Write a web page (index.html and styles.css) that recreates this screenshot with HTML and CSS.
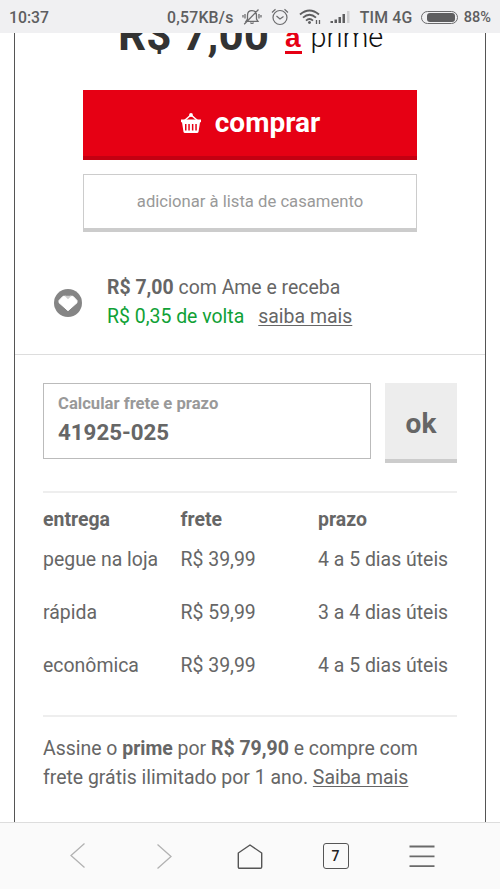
FILE: index.html
```html
<!DOCTYPE html>
<html lang="pt-BR">
<head>
<meta charset="utf-8">
<title>Produto</title>
<link rel="stylesheet" href="styles.css">
</head>
<body>
<header class="status">
  <span class="clock">10:37</span>
  <span class="speed">0,57KB/s</span>
  <svg class="mute" width="20" height="18" viewBox="0 0 20 18" fill="none" stroke="#6c6c6e" stroke-width="1.3">
    <path d="M5.500 11V7.500C5.500 4.500 7 2.700 10 2.700S14.500 4.500 14.500 7.500V11l1.500 2.300H4L5.500 11M8.500 14.500c.4 1.300 2.600 1.300 3 0M2.200 16.300L16.500 1.500M3 6v4.500M17 6v4.500M1 7v2.500M19 7v2.500"/>
  </svg>
  <svg class="alarm" width="18" height="18" viewBox="0 0 18 18" fill="none" stroke="#6c6c6e" stroke-width="1.2">
    <circle cx="9" cy="9.500" r="7"/><path d="M5.500 8l3.500 3 3.500-2.500M1 4.500L4.500 1.300M17 4.500L13.500 1.300"/>
  </svg>
  <svg class="wifi" width="23" height="18" viewBox="0 0 23 18" fill="none" stroke="#5e5e60" stroke-width="1.900">
    <path d="M1 6.500Q10.500-1.500 20 6.500M4 9.600Q10.500 4 17 9.600M7 12.600Q10.500 9.500 14 12.600"/>
    <circle cx="10.500" cy="14.500" r="1.500" fill="#5e5e60" stroke="none"/>
    <path d="M17.500 12v4M20.500 12v4" stroke-width="1.300"/>
  </svg>
  <svg class="signal" width="21" height="14" viewBox="0 0 21 14" fill="#5e5e60">
    <path d="M.5 11h2.500v2H.5zM4.500 9.500H7V13H4.500zM8.500 7H11v6H8.500zM12.500 4H15v9h-2.500z"/><path d="M17 1h2.500v12H17z" fill="#cfcfd1"/>
  </svg>
  <span class="carrier">TIM 4G</span>
  <span class="battery"><span class="charge"></span></span>
  <span class="percent">88%</span>
</header>

<main class="page">
  <section class="card">
    <div class="price-row">
      <span class="price">R$ 7,00</span>
      <span class="logo-a">a</span>
      <span class="logo-prime">prime</span>
    </div>
    <button class="buy">
      <svg width="22" height="22" viewBox="0 0 22 22">
        <path d="M4.500 8.500L11 3l6.500 5.500" fill="none" stroke="#fff" stroke-width="1.500"/>
        <circle cx="11" cy="3" r="1.900" fill="#fff"/>
        <path fill="#fff" fill-rule="evenodd" d="M1 7.500h20v2.800h-1L18.500 20q-.3 1-1.500 1H5q-1.200 0-1.500-1L2 10.300H1zM5 12v6.500h1.500V12zM8.300 12v6.500h1.500V12zM11.900 12v6.500h1.500V12zM15.300 12v6.500h1.500V12z"/>
      </svg>
      <span>comprar</span>
    </button>
    <button class="wishlist">adicionar à lista de casamento</button>

    <div class="cashback">
      <svg width="28" height="28" viewBox="0 0 28 28">
        <circle cx="14" cy="14" r="14" fill="#858585"/>
        <path d="M5 11.500L9 7.300h3l2 2 2-2h3l4 4.200v2.200L14 21.700 5 13.700z" fill="#fff" stroke="#fff" stroke-linejoin="round"/>
        <path d="M10.500 6.800L14 10.300l3.500-3.500z" fill="#cfcfcf"/>
      </svg>
      <div class="cashback-text">
        <div><b>R$ 7,00</b> com Ame e receba</div>
        <div><span class="green">R$ 0,35 de volta</span><a class="link">saiba mais</a></div>
      </div>
    </div>

    <div class="shipping">
      <div class="zip-row">
        <label class="zip">
          <span class="zip-label">Calcular frete e prazo</span>
          <span class="zip-value">41925-025</span>
        </label>
        <button class="ok">ok</button>
      </div>
      <div class="rates">
        <div class="rate head"><span>entrega</span><span>frete</span><span>prazo</span></div>
        <div class="rate"><span>pegue na loja</span><span>R$ 39,99</span><span>4 a 5 dias úteis</span></div>
        <div class="rate"><span>rápida</span><span>R$ 59,99</span><span>3 a 4 dias úteis</span></div>
        <div class="rate"><span>econômica</span><span>R$ 39,99</span><span>4 a 5 dias úteis</span></div>
      </div>
      <p class="prime">Assine o <b>prime</b> por <b>R$ 79,90</b> e compre com<br>frete grátis ilimitado por 1 ano. <a class="link">Saiba mais</a></p>
    </div>
  </section>
</main>

<nav class="toolbar">
  <svg width="28" height="28" viewBox="0 0 28 28" fill="none" stroke="#b2b2b2" stroke-width="1.300"><path d="M20.500 1.500L7 13.500l13.500 12"/></svg>
  <svg width="28" height="28" viewBox="0 0 28 28" fill="none" stroke="#b2b2b2" stroke-width="1.300"><path d="M6.500 2.500L20 14.500l-13.500 12"/></svg>
  <svg width="28" height="28" viewBox="0 0 28 28" fill="none" stroke="#555" stroke-width="1.400" stroke-linejoin="round"><path d="M13 3l11.700 8v14q0 1.300-1.300 1.300H2.600q-1.300 0-1.300-1.300V11z"/></svg>
  <span class="tabs">7</span>
  <svg width="28" height="28" viewBox="0 0 28 28" fill="none" stroke="#6a6a6a" stroke-width="1.800"><path d="M1.500 4.500h25M1.500 14.300h25M1.500 24.200h25"/></svg>
</nav>
</body>
</html>
```

FILE: styles.css
```css
* { box-sizing: border-box; }
body {
  margin: 0;
  height: 889px;
  display: flex;
  flex-direction: column;
  overflow: hidden;
  background: #fff;
  color: #666;
  font-family: Roboto, sans-serif;
  font-size: 19.45px;
}
button { font-family: inherit; padding: 0; border: 0; }
.status {
  height: 33px;
  flex: none;
  display: flex;
  align-items: center;
  padding: 1px 9px 0;
  background: #f0f0f2;
  color: #5e5e60;
  font-size: 15.8px;
  font-weight: 500;
  white-space: nowrap;
}
.clock { width: 158px; }
.speed { width: 75px; letter-spacing: 0.25px; }
.mute { margin-right: 9px; }
.alarm { margin-right: 10px; }
.wifi { margin-right: 8px; }
.signal { margin-right: 9px; }
.carrier { width: 61px; letter-spacing: 0.15px; }
.battery {
  width: 37px;
  height: 13px;
  padding: 1px 2px 1px 5px;
  border: 1.500px solid #6c6c6e;
  border-radius: 7px;
  flex: none;
}
.charge { display: block; height: 100%; border-radius: 3px; background: #5e5e60; }
.percent { margin-left: 6px; font-size: 14.500px; }

.page { flex: 1; min-height: 0; overflow: hidden; padding: 0 14px; }
.card {
  height: 100%;
  display: flex;
  flex-direction: column;
  border: solid #555;
  border-width: 0 1px;
}
.price-row, .buy, .wishlist, .cashback { flex: none; }
.price-row {
  height: 50px;
  margin-top: -22px;
  display: flex;
  padding-left: 103px;
  line-height: 50px;
  white-space: nowrap;
  color: #333;
}
.price { width: 167px; font-size: 44px; font-weight: 700; margin-top: -1px; }
.logo-a {
  width: 17px;
  height: 32px;
  margin-top: 11px;
  border-bottom: 3.500px solid #e60014;
  color: #e60014;
  font: 700 28px/32px "Liberation Sans", sans-serif;
}
.logo-prime {
  margin: 1px 0 0 8.500px;
  color: #111;
  font-size: 28.8px;
  font-weight: 300;
}
.buy, .wishlist { width: 334px; align-self: center; }
.buy {
  height: 70.500px;
  margin-top: 28.500px;
  display: flex;
  justify-content: center;
  align-items: center;
  gap: 13px;
  background: #e60014;
  border-bottom: 4px solid #c40012;
  color: #fff;
  font-size: 28px;
  font-weight: 700;
}
.wishlist {
  height: 58px;
  margin-top: 14px;
  border: 1.500px solid #ccc;
  border-bottom: 4px solid #ccc;
  background: #fff;
  color: #999;
  font-size: 16.650px;
}
.cashback {
  height: 123px;
  display: flex;
  align-items: center;
  padding: 19px 0 0 39px;
  gap: 25px;
  border-bottom: 1px solid #ddd;
  line-height: 29px;
}
.cashback-text { margin-top: -2px; }
.green { color: #10a136; margin-right: 14px; }
.link { text-decoration: underline; text-underline-offset: 2px; text-decoration-thickness: 1px; }
.shipping { padding: 28px 28px 0; }
.zip-row { display: flex; gap: 14px; height: 80px; }
.zip {
  width: 328px;
  height: 76px;
  display: flex;
  flex-direction: column;
  padding: 7px 14px;
  border: 1px solid #bbb;
}
.zip-label { color: #999; font-size: 16.65px; font-weight: 700; line-height: 26px; }
.zip-value { font-size: 22.3px; font-weight: 700; line-height: 30px; }
.ok {
  flex: 1;
  padding-top: 4px;
  background: #ededed;
  border-bottom: 4px solid #ccc;
  color: #666;
  font-size: 28px;
  font-weight: 700;
}
.rates {
  height: 226px;
  margin-top: 28px;
  padding-top: 13px;
  border: solid #eee;
  border-width: 2px 0;
}
.rate {
  display: grid;
  grid-template-columns: 137.500px 137.500px 1fr;
  height: 53px;
  line-height: 27px;
  white-space: nowrap;
}
.head { height: 40px; font-weight: 700; }
.prime { margin: 17px 0 0; line-height: 29px; white-space: nowrap; }

.toolbar {
  height: 67px;
  flex: none;
  display: flex;
  align-items: center;
  justify-content: space-between;
  padding: 0 64px;
  border-top: 1px solid #ddd;
  background: #fafafa;
}
.tabs {
  width: 26px;
  height: 26px;
  margin: 0 1px 0 -1px;
  border: 1.500px solid #555;
  border-radius: 3px;
  color: #222;
  font-size: 14px;
  font-weight: 500;
  line-height: 24px;
  text-align: center;
}
```
